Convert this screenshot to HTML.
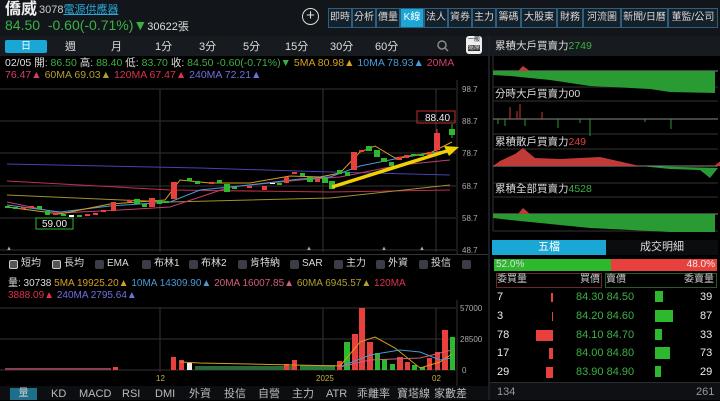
<!DOCTYPE html>
<html><head><meta charset="utf-8"><style>
*{margin:0;padding:0;box-sizing:border-box;line-height:1.15}
body{width:720px;height:400px;background:#000;overflow:hidden;position:relative;font-family:"Liberation Sans","Noto Sans CJK TC",sans-serif;color:#ddd}
.a{position:absolute;white-space:nowrap}
.tb{position:absolute;top:8px;height:20px;border:1px solid #2d5f80;background:#14202a;color:#d8d8d8;font-size:10px;line-height:18px;text-align:center}
.pt{position:absolute;top:40px;font-size:11px;color:#ddd;line-height:14px}
.bt{position:absolute;top:388px;font-size:11px;color:#bbb;line-height:12px}
.cb{position:absolute;top:258px;font-size:10px;color:#ddd;display:flex;align-items:center;height:12px;line-height:12px;white-space:nowrap}
.cb i{display:inline-block;width:9px;height:9px;background:#3a3d45;border-radius:2px;margin-right:3px}
.r{position:absolute;font-size:11px;height:18px;line-height:18px}
</style></head><body>
<!-- header -->
<div class="a" style="left:0;top:0;width:720px;height:36px;background:#12161b"></div>
<div class="a" style="left:5px;top:1px;font-size:16px;color:#eee;font-weight:bold;line-height:18px">僑威</div>
<div class="a" style="left:39px;top:4px;font-size:11px;color:#ccc;line-height:13px">3078<span style="color:#2ba8d8;text-decoration:underline">電源供應器</span></div>
<div class="a" style="left:5px;top:17px;font-size:14px;color:#3cb043;line-height:16px">84.50&nbsp; -0.60(-0.71%)▼<span style="color:#ddd;font-size:11px">30622張</span></div>
<div class="a" style="left:302px;top:8px;width:17px;height:17px;border:1.5px solid #ddd;border-radius:50%;color:#ddd;font-size:15px;line-height:13px;text-align:center">+</div>
<div class="tb" style="left:328px;width:24px">即時</div>
<div class="tb" style="left:352px;width:24px">分析</div>
<div class="tb" style="left:376px;width:24px">價量</div>
<div class="tb" style="left:400px;width:24px;background:#1ba7d6;color:#fff">K線</div>
<div class="tb" style="left:424px;width:24px">法人</div>
<div class="tb" style="left:448px;width:24px">資券</div>
<div class="tb" style="left:472px;width:24px">主力</div>
<div class="tb" style="left:496px;width:25px">籌碼</div>
<div class="tb" style="left:521px;width:36px">大股東</div>
<div class="tb" style="left:557px;width:26px">財務</div>
<div class="tb" style="left:583px;width:38px">河流圖</div>
<div class="tb" style="left:621px;width:47px">新聞/日曆</div>
<div class="tb" style="left:668px;width:50px">董監/公司</div>
<!-- period row -->
<div class="a" style="left:0;top:36px;width:488px;height:20px;background:#171b20"></div>
<div class="a" style="left:5px;top:40px;width:42px;height:13px;background:#1ba7d6;border-radius:2px;color:#fff;font-size:10px;text-align:center;line-height:13px">日</div>
<div class="pt" style="left:65px">週</div><div class="pt" style="left:111px">月</div>
<div class="pt" style="left:155px">1分</div><div class="pt" style="left:199px">3分</div>
<div class="pt" style="left:243px">5分</div><div class="pt" style="left:285px">15分</div>
<div class="pt" style="left:330px">30分</div><div class="pt" style="left:375px">60分</div>
<svg class="a" style="left:436px;top:39px" width="14" height="14"><circle cx="6" cy="6" r="4" fill="none" stroke="#888" stroke-width="1.5"/><line x1="9" y1="9" x2="12" y2="12" stroke="#888" stroke-width="1.5"/></svg>
<div class="a" style="left:466px;top:36px;width:16px;height:18px;background:#eee;border-radius:3px;font-size:6px;color:#000;text-align:center;line-height:8px">一般<br><span style="background:#333;color:#eee">還原</span></div>
<!-- info -->
<div class="a" style="left:5px;top:57px;font-size:10.5px;color:#ddd;line-height:12px">02/05 開: <span style="color:#3cb043">86.50</span> 高: <span style="color:#3cb043">88.40</span> 低: <span style="color:#3cb043">83.70</span> 收: <span style="color:#3cb043">84.50 -0.60(-0.71%)▼</span> <span style="color:#d6a020">5MA 80.98▲</span> <span style="color:#4a9ad8">10MA 78.93▲</span> <span style="color:#d0406a">20MA</span></div>
<div class="a" style="left:5px;top:69px;font-size:10.5px;line-height:12px"><span style="color:#d0406a">76.47▲</span> <span style="color:#b0a030">60MA 69.03▲</span> <span style="color:#e03050">120MA 67.47▲</span> <span style="color:#7070e0">240MA 72.21▲</span></div>
<!-- price chart -->
<svg class="a" style="left:0;top:80px" width="488" height="175">
<g stroke="#333" stroke-width="1">
<line x1="0" y1="9" x2="456" y2="9"/><line x1="0" y1="41" x2="456" y2="41"/><line x1="0" y1="73" x2="456" y2="73"/><line x1="0" y1="106" x2="456" y2="106"/><line x1="0" y1="138" x2="456" y2="138"/><line x1="0" y1="170" x2="456" y2="170"/>
<line x1="160" y1="9" x2="160" y2="172"/><line x1="323" y1="9" x2="323" y2="172"/><line x1="436" y1="9" x2="436" y2="172"/>
<line x1="457" y1="0" x2="457" y2="175"/>
</g>
<g fill="#aaa" font-size="8"><text x="462" y="12">98.7</text><text x="462" y="44">88.7</text><text x="462" y="76">78.7</text><text x="462" y="109">68.7</text><text x="462" y="141">58.7</text><text x="462" y="173">48.7</text></g>
<g fill="none" stroke-width="1">
<polyline stroke="#4444b0" points="7,84 200,88 330,92 450,95"/>
<polyline stroke="#c03050" points="7,101 170,110 330,112 450,110"/>
<polyline stroke="#a09030" points="7,115 170,122 330,118 450,105"/>
<polyline stroke="#c04070" points="7,122 60,133 120,130 170,127 230,107 300,100 340,97 400,85 450,80"/>
<polyline stroke="#4a9ad8" points="7,125 60,132 110,126 170,122 200,110 240,106 300,99 330,97 360,86 400,78 450,70"/>
<polyline stroke="#d6a020" points="7,127 60,134 110,124 165,120 180,100 210,103 250,103 290,96 320,97 340,93 360,72 375,66 395,78 430,73 452,62"/>
</g>
<g>
<rect x="5" y="126" width="5" height="2" fill="#2eb82e"/><rect x="13" y="127" width="5" height="2" fill="#2eb82e"/><rect x="21" y="127" width="5" height="2" fill="#e8403c"/><rect x="29" y="126" width="5" height="2" fill="#e8403c"/><rect x="37" y="126" width="5" height="3" fill="#2eb82e"/>
<rect x="45" y="131" width="5" height="4" fill="#2eb82e"/><rect x="53" y="133" width="5" height="2" fill="#e8403c"/><rect x="61" y="134" width="5" height="2" fill="#2eb82e"/><rect x="69" y="135" width="5" height="2" fill="#fff"/><rect x="77" y="135" width="5" height="2" fill="#2eb82e"/><rect x="85" y="134" width="5" height="2" fill="#e8403c"/><rect x="93" y="133" width="5" height="2" fill="#e8403c"/><rect x="101" y="130" width="5" height="2" fill="#e8403c"/>
<rect x="111" y="122" width="5" height="9" fill="#e8403c"/><rect x="127" y="120" width="5" height="2" fill="#e8403c"/><rect x="134" y="119" width="6" height="5" fill="#2eb82e"/><rect x="142" y="124" width="5" height="3" fill="#2eb82e"/><rect x="149" y="118" width="6" height="9" fill="#e8403c"/><rect x="157" y="120" width="5" height="4" fill="#2eb82e"/><rect x="164" y="121" width="5" height="2" fill="#2eb82e"/>
<rect x="171" y="102" width="6" height="17" fill="#e8403c"/><rect x="187" y="98" width="5" height="3" fill="#2eb82e"/><rect x="195" y="101" width="5" height="3" fill="#2eb82e"/><rect x="209" y="102" width="5" height="2" fill="#e8403c"/><rect x="217" y="100" width="5" height="3" fill="#2eb82e"/><rect x="224" y="104" width="6" height="8" fill="#2eb82e"/><rect x="232" y="107" width="5" height="2" fill="#2eb82e"/><rect x="247" y="106" width="5" height="2" fill="#e8403c"/><rect x="262" y="106" width="5" height="4" fill="#e8403c"/><rect x="270" y="103" width="5" height="1" fill="#fff"/><rect x="277" y="103" width="5" height="2" fill="#2eb82e"/>
<rect x="284" y="97" width="5" height="6" fill="#e8403c"/><rect x="292" y="92" width="5" height="2" fill="#e8403c"/><rect x="300" y="93" width="5" height="3" fill="#2eb82e"/><rect x="307" y="97" width="6" height="5" fill="#2eb82e"/><rect x="315" y="99" width="5" height="3" fill="#e8403c"/><rect x="322" y="98" width="6" height="5" fill="#2eb82e"/><rect x="329" y="101" width="6" height="8" fill="#2eb82e"/>
<rect x="337" y="90" width="5" height="4" fill="#2eb82e"/><rect x="345" y="92" width="5" height="4" fill="#2eb82e"/><rect x="351" y="72" width="6" height="18" fill="#e8403c"/><rect x="359" y="70" width="5" height="2" fill="#e8403c"/><rect x="366" y="66" width="6" height="5" fill="#2eb82e"/><rect x="374" y="70" width="6" height="7" fill="#2eb82e"/><rect x="381" y="78" width="6" height="4" fill="#2eb82e"/><rect x="389" y="82" width="5" height="4" fill="#2eb82e"/><rect x="396" y="77" width="6" height="3" fill="#e8403c"/><rect x="404" y="75" width="5" height="3" fill="#e8403c"/><rect x="411" y="74" width="5" height="2" fill="#2eb82e"/><rect x="419" y="74" width="5" height="2" fill="#2eb82e"/><rect x="427" y="72" width="5" height="3" fill="#e8403c"/>
<rect x="434" y="53" width="6" height="17" fill="#e8403c"/><line x1="437" y1="49" x2="437" y2="73" stroke="#e8403c"/>
<rect x="449" y="49" width="6" height="6" fill="#2eb82e"/><line x1="452" y1="44" x2="452" y2="58" stroke="#2eb82e"/>
</g>
<line x1="332" y1="107" x2="450" y2="70" stroke="#f0d000" stroke-width="3.5"/>
<polygon points="459,67 444,66 449,76" fill="#f0d000"/>
<rect x="417" y="31" width="38" height="12" fill="none" stroke="#c0302c"/><text x="425" y="41" fill="#eee" font-size="10">88.40</text>
<rect x="36" y="138" width="37" height="11" fill="none" stroke="#2eb82e"/><text x="42" y="147" fill="#eee" font-size="10">59.00</text>
<g fill="#aa9" font-size="6"><text x="6" y="170">▲</text><text x="306" y="170">▲</text><text x="381" y="170">▲</text><text x="419" y="170">▲</text></g>
</svg>
<!-- checkboxes -->
<div class="a" style="left:0;top:254px;width:488px;height:1px;background:#333"></div>
<div class="cb" style="left:9px"><i style="background:#555;border:1px solid #ccc"></i>短均</div>
<div class="cb" style="left:52px"><i style="background:#555;border:1px solid #ccc"></i>長均</div>
<div class="cb" style="left:95px"><i></i>EMA</div>
<div class="cb" style="left:142px"><i></i>布林1</div>
<div class="cb" style="left:189px"><i></i>布林2</div>
<div class="cb" style="left:238px"><i></i>肯特納</div>
<div class="cb" style="left:290px"><i></i>SAR</div>
<div class="cb" style="left:334px"><i></i>主力</div>
<div class="cb" style="left:376px"><i></i>外資</div>
<div class="cb" style="left:419px"><i></i>投信</div>
<div class="cb" style="left:462px"><i></i></div>
<div class="a" style="left:8px;top:278px;font-size:10px;color:#ddd;line-height:12px">量: 30738 <span style="color:#d6a020">5MA 19925.20▲</span> <span style="color:#4a9ad8">10MA 14309.90▲</span> <span style="color:#d0607a">20MA 16007.85▲</span> <span style="color:#b0a030">60MA 6945.57▲</span> <span style="color:#e03050">120MA</span></div>
<div class="a" style="left:8px;top:290px;font-size:10px;line-height:12px"><span style="color:#e03050">3888.09▲</span> <span style="color:#7070e0">240MA 2795.64▲</span></div>
<svg class="a" style="left:0;top:300px" width="488" height="88">
<g stroke="#333"><line x1="0" y1="8" x2="456" y2="8"/><line x1="0" y1="39" x2="456" y2="39"/><line x1="0" y1="70" x2="456" y2="70"/><line x1="160" y1="8" x2="160" y2="72"/><line x1="323" y1="8" x2="323" y2="72"/><line x1="436" y1="8" x2="436" y2="72"/><line x1="457" y1="0" x2="457" y2="88"/></g>
<g fill="#aaa" font-size="8"><text x="460" y="11">57000</text><text x="460" y="42">28500</text><text x="462" y="73">0</text></g>
<g fill="#c8b040" font-size="8"><text x="156" y="81">12</text><text x="316" y="81">2025</text><text x="432" y="81">02</text></g>
<g>
<rect x="5" y="68" width="106" height="2" fill="#884050"/><rect x="113" y="67" width="5" height="3" fill="#e8403c"/>
<rect x="171" y="57" width="5" height="13" fill="#e8403c"/><rect x="179" y="60" width="5" height="10" fill="#e8403c"/><rect x="187" y="63" width="5" height="7" fill="#eee"/>
<rect x="195" y="66" width="100" height="4" fill="#2a6a3a"/><rect x="284" y="64" width="5" height="6" fill="#e8403c"/><rect x="292" y="60" width="5" height="10" fill="#e8403c"/><rect x="300" y="65" width="35" height="5" fill="#2a7a3a"/>
<rect x="337" y="61" width="5" height="9" fill="#e8403c"/><rect x="344" y="42" width="6" height="28" fill="#2eb82e"/><rect x="352" y="34" width="6" height="36" fill="#e8403c"/><rect x="359" y="8" width="6" height="62" fill="#e8403c"/><rect x="367" y="42" width="6" height="28" fill="#e8403c"/><rect x="375" y="53" width="5" height="17" fill="#2eb82e"/><rect x="382" y="59" width="5" height="11" fill="#2eb82e"/><rect x="390" y="64" width="5" height="6" fill="#2eb82e"/><rect x="397" y="57" width="6" height="13" fill="#e8403c"/><rect x="405" y="62" width="5" height="8" fill="#e8403c"/><rect x="412" y="65" width="5" height="5" fill="#2eb82e"/><rect x="420" y="67" width="5" height="3" fill="#2eb82e"/><rect x="427" y="58" width="5" height="12" fill="#e8403c"/><rect x="435" y="52" width="5" height="18" fill="#e8403c"/><rect x="442" y="30" width="6" height="40" fill="#e8403c"/><rect x="450" y="37" width="5" height="33" fill="#2eb82e"/>
</g>
<g fill="none" stroke-width="1">
<polyline stroke="#d6a020" points="180,62 200,63 340,66 360,42 375,37 395,48 420,68 440,62 452,54"/>
<polyline stroke="#4a9ad8" points="340,67 370,55 400,50 420,52 440,60 452,58"/>
<polyline stroke="#d0607a" points="340,67 370,60 420,58 452,50"/>
</g>
</svg>
<!-- bottom tabs -->
<div class="a" style="left:0;top:386px;width:488px;height:14px;background:#0c0e11"></div>
<div class="a" style="left:10px;top:388px;width:27px;height:12px;background:#1d6f8c;font-size:10px;text-align:center;color:#ccc;line-height:12px">量</div>
<div class="bt" style="left:51px">KD</div><div class="bt" style="left:79px">MACD</div><div class="bt" style="left:122px">RSI</div><div class="bt" style="left:155px">DMI</div><div class="bt" style="left:189px">外資</div><div class="bt" style="left:224px">投信</div><div class="bt" style="left:258px">自營</div><div class="bt" style="left:292px">主力</div><div class="bt" style="left:326px">ATR</div><div class="bt" style="left:357px">乖離率</div><div class="bt" style="left:397px">寶塔線</div><div class="bt" style="left:434px">家數差</div>
<!-- right panel -->
<div class="a" style="left:488px;top:36px;width:2px;height:364px;background:#1a1e24"></div>
<div class="a" style="left:490px;top:36px;width:230px;height:20px;background:#171b20"></div>
<div class="a" style="left:495px;top:40px;font-size:10.5px;color:#ddd;line-height:13px">累積大戶買賣力<span style="color:#3cb043">2749</span></div>
<div class="a" style="left:495px;top:88px;font-size:10.5px;color:#ddd;line-height:13px">分時大戶買賣力00</div>
<div class="a" style="left:495px;top:136px;font-size:10.5px;color:#ddd;line-height:13px">累積散戶買賣力<span style="color:#e8403c">249</span></div>
<div class="a" style="left:495px;top:183px;font-size:10.5px;color:#ddd;line-height:13px">累積全部買賣力<span style="color:#3cb043">4528</span></div>
<svg class="a" style="left:490px;top:56px" width="230" height="178">
<g stroke="#333"><line x1="3" y1="0" x2="3" y2="175"/><line x1="3" y1="31" x2="228" y2="31"/><line x1="3" y1="45" x2="228" y2="45"/><line x1="3" y1="78" x2="228" y2="78"/><line x1="3" y1="93" x2="228" y2="93"/><line x1="3" y1="127" x2="228" y2="127"/><line x1="3" y1="141" x2="228" y2="141"/><line x1="3" y1="175" x2="228" y2="175"/></g>
<line x1="3" y1="15" x2="228" y2="15" stroke="#888"/>
<polygon fill="#2a9a32" points="3,15 3,19 20,20 60,24 100,30 160,33 180,36 225,37 225,15"/>
<polygon fill="#c03b37" points="28,15 33,10 40,15"/>
<line x1="3" y1="63" x2="228" y2="63" stroke="#888"/>
<g stroke="#c03b37"><line x1="20" y1="63" x2="20" y2="51"/><line x1="30" y1="63" x2="30" y2="48"/><line x1="27" y1="63" x2="27" y2="55"/><line x1="52" y1="63" x2="52" y2="56"/></g>
<g stroke="#2a9a32"><line x1="8" y1="63" x2="8" y2="68"/><line x1="15" y1="63" x2="15" y2="70"/><line x1="35" y1="63" x2="35" y2="70"/><line x1="68" y1="63" x2="68" y2="72"/><line x1="100" y1="63" x2="100" y2="80"/><line x1="90" y1="63" x2="90" y2="67"/><line x1="181" y1="63" x2="181" y2="73"/><line x1="155" y1="63" x2="155" y2="66"/></g>
<line x1="3" y1="110" x2="228" y2="110" stroke="#888"/>
<polygon fill="#c03b37" points="3,110 10,105 25,98 33,92 45,102 70,103 110,101 150,110"/>
<polygon fill="#2a9a32" points="150,110 180,113 210,114 220,122 228,112"/>
<polygon fill="#c03b37" points="224,110 232,104 232,110"/>
<line x1="3" y1="158" x2="228" y2="158" stroke="#888"/>
<polygon fill="#2a9a32" points="3,158 3,162 20,164 60,168 100,172 160,175 180,176 225,176 225,158"/>
<polygon fill="#c03b37" points="28,158 33,152 40,158"/>
</svg>
<div class="a" style="left:492px;top:240px;width:114px;height:15px;background:#1ba7d6;color:#fff;font-size:11px;text-align:center;line-height:15px">五檔</div>
<div class="a" style="left:606px;top:240px;width:112px;height:15px;background:#0a0c0e;color:#ddd;font-size:11px;text-align:center;line-height:15px">成交明細</div>
<div class="a" style="left:494px;top:259px;width:117px;height:12px;background:#2eb82e;color:#ddd;font-size:10px;line-height:12px;padding-left:2px">52.0%</div>
<div class="a" style="left:611px;top:259px;width:106px;height:12px;background:#e8403c;color:#eee;font-size:10px;line-height:12px;text-align:right;padding-right:2px">48.0%</div>
<div class="a" style="left:496px;top:273px;width:106px;height:15px;border:1px solid #6a2a2a"></div>
<div class="a" style="left:605px;top:273px;width:112px;height:15px;border:1px solid #2a5a2a"></div>
<div class="r" style="left:497px;top:271px;font-size:10px;color:#ccc">委買量</div>
<div class="r" style="left:580px;top:271px;font-size:10px;color:#ccc">買價</div>
<div class="r" style="left:606px;top:271px;font-size:10px;color:#ccc">賣價</div>
<div class="r" style="left:684px;top:271px;font-size:10px;color:#ccc">委賣量</div>
<div class="a" style="left:551px;top:293px;width:2px;height:9px;background:#e8403c"></div>
<div class="a" style="left:552px;top:312px;width:1px;height:9px;background:#e8403c"></div>
<div class="a" style="left:536px;top:330px;width:17px;height:11px;background:#e8403c"></div>
<div class="a" style="left:549px;top:348px;width:4px;height:11px;background:#e8403c"></div>
<div class="a" style="left:546px;top:367px;width:7px;height:11px;background:#e8403c"></div>
<div class="a" style="left:655px;top:291px;width:8px;height:11px;background:#2eb82e"></div>
<div class="a" style="left:655px;top:310px;width:18px;height:12px;background:#2eb82e"></div>
<div class="a" style="left:655px;top:329px;width:7px;height:11px;background:#2eb82e"></div>
<div class="a" style="left:655px;top:347px;width:15px;height:12px;background:#2eb82e"></div>
<div class="a" style="left:655px;top:366px;width:6px;height:11px;background:#2eb82e"></div>
<div class="r" style="left:497px;top:288px;color:#eee">7</div><div class="r" style="left:576px;top:288px;color:#3cb043">84.30 84.50</div><div class="r" style="left:700px;top:288px;color:#eee">39</div>
<div class="r" style="left:497px;top:307px;color:#eee">3</div><div class="r" style="left:576px;top:307px;color:#3cb043">84.20 84.60</div><div class="r" style="left:700px;top:307px;color:#eee">87</div>
<div class="r" style="left:497px;top:326px;color:#eee">78</div><div class="r" style="left:576px;top:326px;color:#3cb043">84.10 84.70</div><div class="r" style="left:700px;top:326px;color:#eee">33</div>
<div class="r" style="left:497px;top:344px;color:#eee">17</div><div class="r" style="left:576px;top:344px;color:#3cb043">84.00 84.80</div><div class="r" style="left:700px;top:344px;color:#eee">73</div>
<div class="r" style="left:497px;top:363px;color:#eee">29</div><div class="r" style="left:576px;top:363px;color:#3cb043">83.90 84.90</div><div class="r" style="left:700px;top:363px;color:#eee">29</div>
<div class="a" style="left:490px;top:382px;width:230px;height:18px;background:#0e1013;border-top:1px solid #2a2d33"></div>
<div class="r" style="left:497px;top:383px;color:#999">134</div><div class="r" style="left:696px;top:383px;color:#999">261</div>
</body></html>
